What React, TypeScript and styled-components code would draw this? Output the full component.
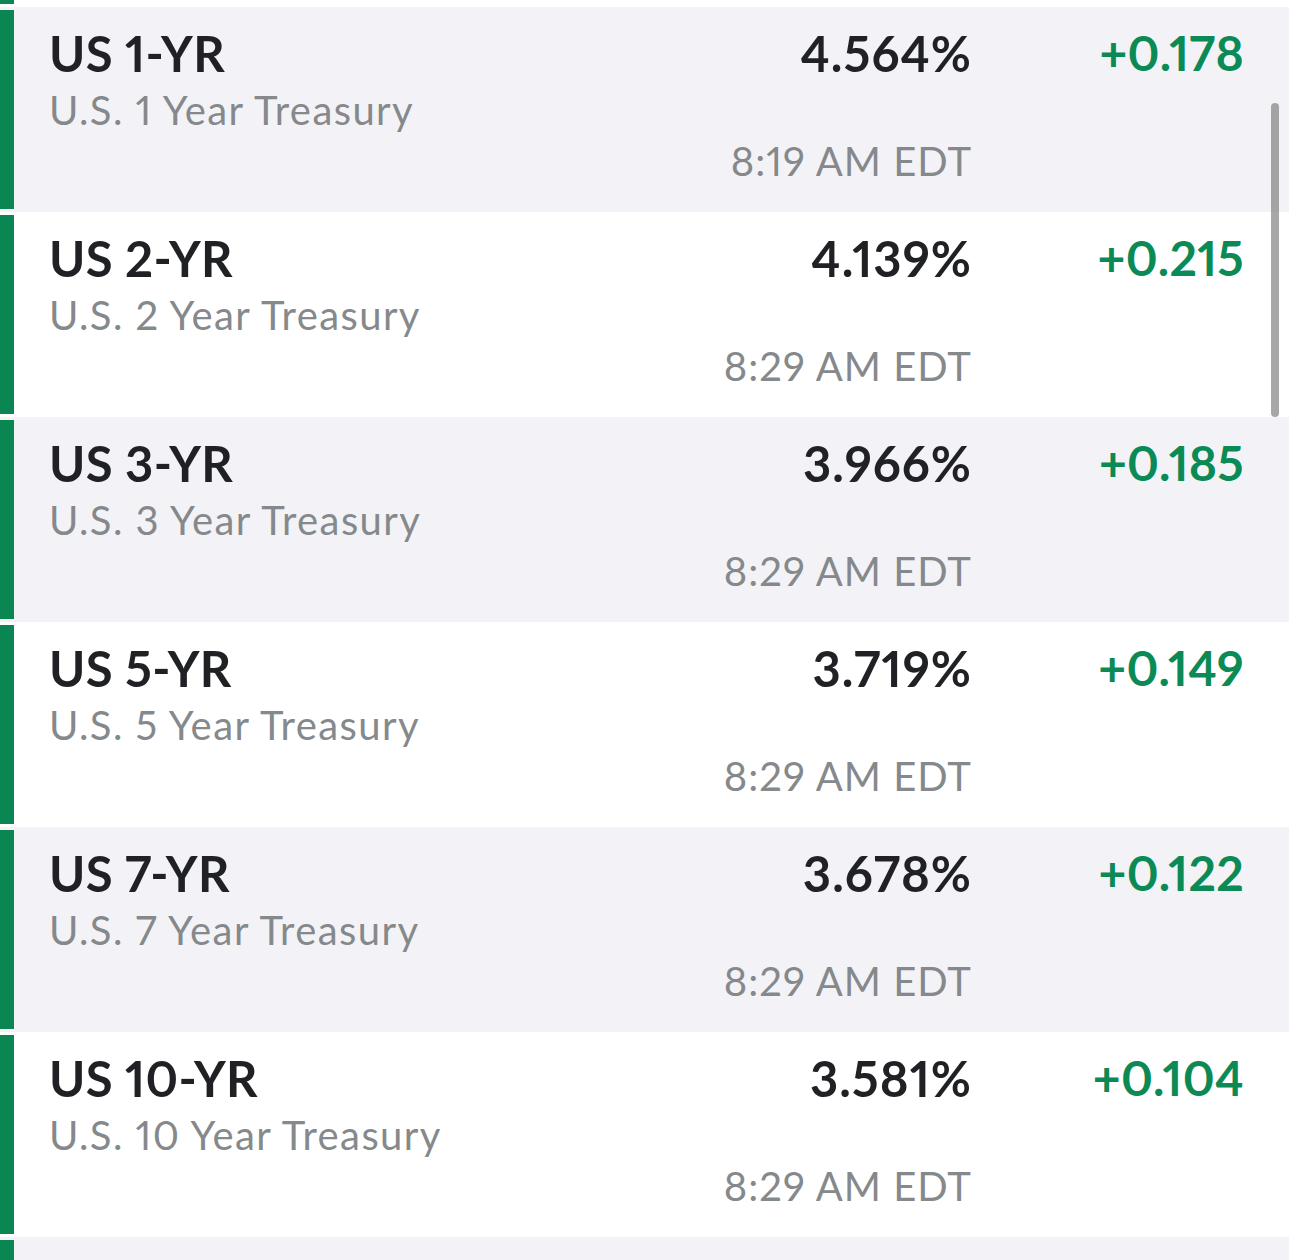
import React from "react";
import styled, { createGlobalStyle } from "styled-components";

const GlobalStyle = createGlobalStyle`
  html, body {
    margin: 0;
    padding: 0;
    background: #ffffff;
  }
  body {
    font-family: "Lato", "Liberation Sans", sans-serif;
    -webkit-font-smoothing: antialiased;
    font-variant-numeric: proportional-nums;
  }
`;

const Page = styled.div`
  position: relative;
  width: 1289px;
  height: 1260px;
  overflow: hidden;
  background: #ffffff;
`;

const Row = styled.div<{ $shade: boolean; $height?: number }>`
  display: flex;
  height: ${(p) => p.$height ?? 205}px;
  background: ${(p) => (p.$shade ? "#f3f3f7" : "#ffffff")};
`;

const Bar = styled.div<{ $top?: number; $bottom?: number }>`
  flex: 0 0 14px;
  margin-top: ${(p) => p.$top ?? 3}px;
  margin-bottom: ${(p) => p.$bottom ?? 3}px;
  background: #0a8652;
`;

const Content = styled.div`
  flex: 1;
  display: grid;
  grid-template-columns: 1fr auto 272px;
  padding: 17px 45px 0 35px;
`;

const Name = styled.div`
  display: flex;
  flex-direction: column;
`;

const Symbol = styled.div`
  font-size: 49px;
  line-height: 1.2;
  font-weight: 700;
  letter-spacing: 0.3px;
  color: #1f2124;
`;

const Description = styled.div`
  margin-top: 3px;
  font-size: 40px;
  line-height: 1.2;
  font-weight: 400;
  letter-spacing: 1.4px;
  color: #86898c;
`;

const Quote = styled.div`
  display: flex;
  flex-direction: column;
  align-items: flex-end;
`;

const Price = styled.div`
  font-size: 49px;
  line-height: 1.2;
  font-weight: 700;
  letter-spacing: 1px;
  color: #1f2124;
`;

const Time = styled.div`
  margin-top: 54px;
  font-size: 40px;
  line-height: 1.2;
  letter-spacing: 1px;
  color: #86898c;
`;

const Change = styled.div<{ $up: boolean }>`
  text-align: right;
  font-size: 48px;
  line-height: 1.2;
  font-weight: 700;
  letter-spacing: 0.3px;
  color: ${(p) => (p.$up ? "#0b8a55" : "#d23a2a")};
`;

const Scrollbar = styled.div`
  position: absolute;
  left: 1271px;
  top: 103px;
  width: 8px;
  height: 314px;
  border-radius: 4px;
  background: rgba(120, 120, 120, 0.65);
`;

const bonds = [
  { symbol: "US 1-YR", name: "U.S. 1 Year Treasury", price: "4.564%", change: "+0.178", time: "8:19 AM EDT" },
  { symbol: "US 2-YR", name: "U.S. 2 Year Treasury", price: "4.139%", change: "+0.215", time: "8:29 AM EDT" },
  { symbol: "US 3-YR", name: "U.S. 3 Year Treasury", price: "3.966%", change: "+0.185", time: "8:29 AM EDT" },
  { symbol: "US 5-YR", name: "U.S. 5 Year Treasury", price: "3.719%", change: "+0.149", time: "8:29 AM EDT" },
  { symbol: "US 7-YR", name: "U.S. 7 Year Treasury", price: "3.678%", change: "+0.122", time: "8:29 AM EDT" },
  { symbol: "US 10-YR", name: "U.S. 10 Year Treasury", price: "3.581%", change: "+0.104", time: "8:29 AM EDT" },
];

const App = () => {
  return (
    <>
      <GlobalStyle />
      <Page>
        <Row $shade={false} $height={7}>
          <Bar $top={0} $bottom={3} />
        </Row>
        {bonds.map((b, i) => (
          <Row key={b.symbol} $shade={i % 2 === 0}>
            <Bar />
            <Content>
              <Name>
                <Symbol>{b.symbol}</Symbol>
                <Description>{b.name}</Description>
              </Name>
              <Quote>
                <Price>{b.price}</Price>
                <Time>{b.time}</Time>
              </Quote>
              <Change $up={b.change.startsWith("+")}>{b.change}</Change>
            </Content>
          </Row>
        ))}
        <Row $shade={true}>
          <Bar />
        </Row>
        <Scrollbar />
      </Page>
    </>
  );
};

export default App;
